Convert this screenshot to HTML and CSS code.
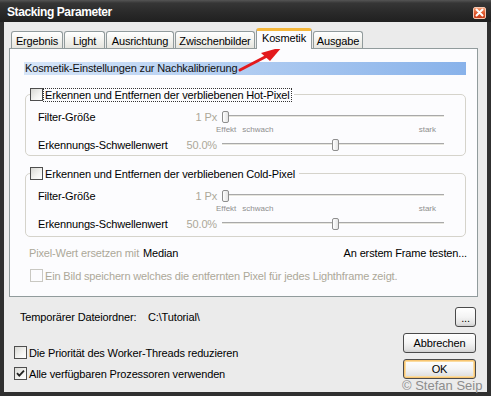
FILE: index.html
```html
<!DOCTYPE html>
<html lang="de">
<head>
<meta charset="utf-8">
<title>Stacking Parameter</title>
<link rel="stylesheet" href="styles.css">
</head>
<body>
<div class="window">
  <div class="titlebar">
    <span class="title">Stacking Parameter</span>
    <span class="close"><svg width="11" height="11" viewBox="0 0 11 11"><path d="M2.5 2.5 L8.5 8.5 M8.5 2.5 L2.5 8.5" stroke="#fff" stroke-width="2" stroke-linecap="round"/></svg></span>
  </div>
  <div class="body">
    <div class="tabs">
      <div class="tab w-erg">Ergebnis</div>
      <div class="tab w-light">Light</div>
      <div class="tab w-aus">Ausrichtung</div>
      <div class="tab w-zw">Zwischenbilder</div>
      <div class="tab active w-kos">Kosmetik</div>
      <div class="tab w-ausg">Ausgabe</div>
    </div>
    <div class="panel">
      <div class="band">Kosmetik-Einstellungen zur Nachkalibrierung</div>

      <div class="group">
        <div class="legend"><span class="cb"></span><span class="ltext focus">Erkennen und Entfernen der verbliebenen Hot-Pixel</span></div>
        <div class="srow first">
          <span class="slabel">Filter-Größe</span>
          <span class="sval">1 Px</span>
          <div class="slider"><div class="track"></div><div class="thumb min"></div></div>
        </div>
        <div class="ticks"><span>Effekt</span><span class="schwach">schwach</span><span class="stark">stark</span></div>
        <div class="srow second">
          <span class="slabel">Erkennungs-Schwellenwert</span>
          <span class="sval">50.0%</span>
          <div class="slider"><div class="track"></div><div class="thumb mid"></div></div>
        </div>
      </div>

      <div class="group g2">
        <div class="legend"><span class="cb"></span><span class="ltext">Erkennen und Entfernen der verbliebenen Cold-Pixel</span></div>
        <div class="srow first">
          <span class="slabel">Filter-Größe</span>
          <span class="sval">1 Px</span>
          <div class="slider"><div class="track"></div><div class="thumb min"></div></div>
        </div>
        <div class="ticks"><span>Effekt</span><span class="schwach">schwach</span><span class="stark">stark</span></div>
        <div class="srow second">
          <span class="slabel">Erkennungs-Schwellenwert</span>
          <span class="sval">50.0%</span>
          <div class="slider"><div class="track"></div><div class="thumb mid"></div></div>
        </div>
      </div>

      <div class="replace">
        <span class="dis">Pixel-Wert ersetzen mit</span>
        <span class="median">Median</span>
        <span class="test">An erstem Frame testen...</span>
      </div>
      <div class="saverow">
        <span class="cb disabled"></span>
        <span class="dis">Ein Bild speichern welches die entfernten Pixel für jedes Lighthframe zeigt.</span>
      </div>
    </div>

    <div class="pathrow">
      <span class="pathlabel">Temporärer Dateiordner:</span>
      <span class="path">C:\Tutorial\</span>
      <span class="btn dots">...</span>
    </div>

    <div class="lower">
      <div class="checks">
        <div class="checkrow"><span class="cb"></span><span>Die Priorität des Worker-Threads reduzieren</span></div>
        <div class="checkrow"><span class="cb checked"><svg width="11" height="11" viewBox="0 0 11 11"><path d="M2 5.2 L4.3 7.6 L9 2.6" fill="none" stroke="#222" stroke-width="1.8"/></svg></span><span>Alle verfügbaren Prozessoren verwenden</span></div>
      </div>
      <div class="buttons">
        <span class="btn wide">Abbrechen</span>
        <span class="btn wide ok">OK</span>
      </div>
    </div>
  </div>

  <svg class="arrow" width="52" height="30" viewBox="0 0 52 30">
    <path d="M4 26 L31 12" stroke="#e3191c" stroke-width="3" stroke-linecap="round"/>
    <polygon points="46,3 25,9 34,17" fill="#e3191c"/>
  </svg>
  <div class="copyright">© Stefan Seip</div>
</div>
</body>
</html>
```
FILE: styles.css
```css
* { box-sizing: border-box; }
html, body { margin: 0; padding: 0; }
body {
  width: 491px;
  height: 396px;
  overflow: hidden;
  background: #2f2f2f;
  font-family: "Liberation Sans", Arial, sans-serif;
  font-size: 11px;
  letter-spacing: -0.15px;
  color: #000;
}
.window {
  position: relative;
  width: 491px;
  height: 396px;
  display: flex;
  flex-direction: column;
}
.titlebar {
  flex: none;
  height: 22px;
  display: flex;
  align-items: center;
  justify-content: space-between;
  padding: 0 5px 0 7px;
  background: linear-gradient(#555, #363636 3px, #2a2a2a 55%, #202020 100%);
}
.title {
  color: #fff;
  font-weight: bold;
  font-size: 12px;
  letter-spacing: -0.4px;
  margin-top: 1px;
}
.close {
  width: 13px;
  height: 12px;
  margin-top: 3px;
  border: 1px solid #f6c7b0;
  border-radius: 2px;
  background: linear-gradient(#f39a70, #e05a30 50%, #c83c18);
  display: flex;
  align-items: center;
  justify-content: center;
}
.body {
  flex: 1;
  background: #ebebeb;
  border: solid #303030;
  border-width: 0 4px 4px 4px;
  padding: 6px 9px 0 5px;
  display: flex;
  flex-direction: column;
}
.tabs {
  display: flex;
  align-items: flex-end;
  height: 20px;
  padding-left: 2px;
  position: relative;
  z-index: 1;
}
.tab {
  height: 17px;
  margin-right: 1px;
  border: 1px solid #919b9c;
  border-bottom: none;
  border-radius: 3px 3px 0 0;
  background: linear-gradient(#ffffff, #f3f3ef 50%, #e6e5df);
  display: flex;
  align-items: center;
  justify-content: center;
  padding-top: 1px;
}
.tab.active {
  height: 21px;
  margin-bottom: -1px;
  background: #fcfcfe;
  border-top: 3px solid #f5b73a;
  padding-top: 0;
  padding-bottom: 4px;
}
.w-erg { width: 52px; }
.w-light { width: 41px; }
.w-aus { width: 68px; }
.w-zw { width: 80px; }
.w-kos { width: 56px; }
.w-ausg { width: 50px; }

.panel {
  height: 249px;
  border: 1px solid #919b9c;
  background: #fcfcfe;
  padding: 13px 11px 0 14px;
  display: flex;
  flex-direction: column;
}
.band {
  height: 13px;
  line-height: 13px;
  padding-left: 1px;
  color: #111;
  background: linear-gradient(90deg, #d6e5f8, #b0ccf1 50%, #88b2ea);
}
.group {
  margin: 19px 0 0 1px;
  border: 1px solid #d5d3cb;
  border-radius: 5px;
  padding-bottom: 3px;
}
.group.g2 { margin-top: 17px; padding-bottom: 5px; }
.legend {
  display: flex;
  width: max-content;
  align-items: center;
  height: 13px;
  margin: -7px 0 0 4px;
  background: #fcfcfe;
  padding-right: 3px;
}
.ltext { margin-left: 1px; padding: 0 1px; line-height: 12px; }
.ltext.focus { outline: 1px dotted #333; outline-offset: 0; }
.cb {
  flex: none;
  width: 13px;
  height: 13px;
  border: 1px solid #4e4e4e;
  background: linear-gradient(135deg, #d8d8d4, #f4f4f2 60%, #ffffff);
  display: inline-flex;
  align-items: center;
  justify-content: center;
}
.cb.disabled { border-color: #c9c8c2; background: #fcfcfe; }

.srow {
  display: grid;
  grid-template-columns: 141px 33px 222px;
  column-gap: 5px;
  align-items: center;
  height: 14px;
  margin-left: 12px;
}
.srow.first { margin-top: 9px; }
.srow.second { margin-top: 4px; }
.sval { text-align: right; color: #aca899; }
.slider { position: relative; height: 14px; }
.track {
  position: absolute;
  left: 0;
  right: 0;
  top: 5px;
  height: 3px;
  border-top: 1px solid #a9a9a9;
  border-bottom: 1px solid #fff;
  background: #e6e5de;
}
.thumb {
  position: absolute;
  top: 1px;
  width: 7px;
  height: 12px;
  border: 1px solid #8e8e8e;
  border-radius: 2px;
  background: linear-gradient(90deg, #ffffff, #e4e4e4);
}
.thumb.min { left: 0; }
.thumb.mid { left: 110px; }
.ticks {
  display: flex;
  width: 220px;
  height: 8px;
  margin: 2px 0 0 190px;
  font-size: 8px;
  line-height: 8px;
  letter-spacing: 0;
  color: #8f8f8f;
}
.schwach { margin-left: 6px; }
.stark { margin-left: auto; }

.replace {
  display: flex;
  align-items: center;
  height: 13px;
  margin: 9px -1px 0 5px;
}
.dis { color: #aca899; }
.median { margin-left: 4px; }
.test { margin-left: auto; }
.saverow {
  display: flex;
  align-items: center;
  height: 13px;
  margin: 10px 0 0 6px;
}
.saverow .dis { margin-left: 2px; }

.pathrow {
  display: flex;
  align-items: center;
  height: 20px;
  margin-top: 10px;
  padding-left: 11px;
}
.pathlabel { width: 128px; }
.btn {
  display: flex;
  align-items: center;
  justify-content: center;
  height: 20px;
  border: 1px solid #4a4a4a;
  border-radius: 3px;
  background: linear-gradient(#ffffff, #f4f4f4 50%, #e2e2e2 85%, #cfcfcf);
}
.dots { width: 21px; margin-left: auto; margin-right: 2px; padding-top: 2px; }
.lower {
  display: flex;
  justify-content: space-between;
  align-items: flex-end;
  margin-top: 6px;
}
.checks {
  display: flex;
  flex-direction: column;
  gap: 8px;
  padding-left: 5px;
  margin-bottom: -1px;
}
.checkrow { display: flex; align-items: center; height: 13px; gap: 2px; }
.buttons {
  display: flex;
  flex-direction: column;
  gap: 6px;
  margin-right: 2px;
}
.btn.wide { width: 73px; }
.btn.ok { box-shadow: inset 0 0 0 1px #f7c572, inset 0 0 0 2px #fbdca0; }

.arrow {
  position: absolute;
  left: 236px;
  top: 44px;
}
.copyright {
  position: absolute;
  left: 402px;
  top: 378px;
  white-space: nowrap;
  font-size: 13px;
  line-height: 15px;
  letter-spacing: 0;
  color: #8d8d8d;
}
```
